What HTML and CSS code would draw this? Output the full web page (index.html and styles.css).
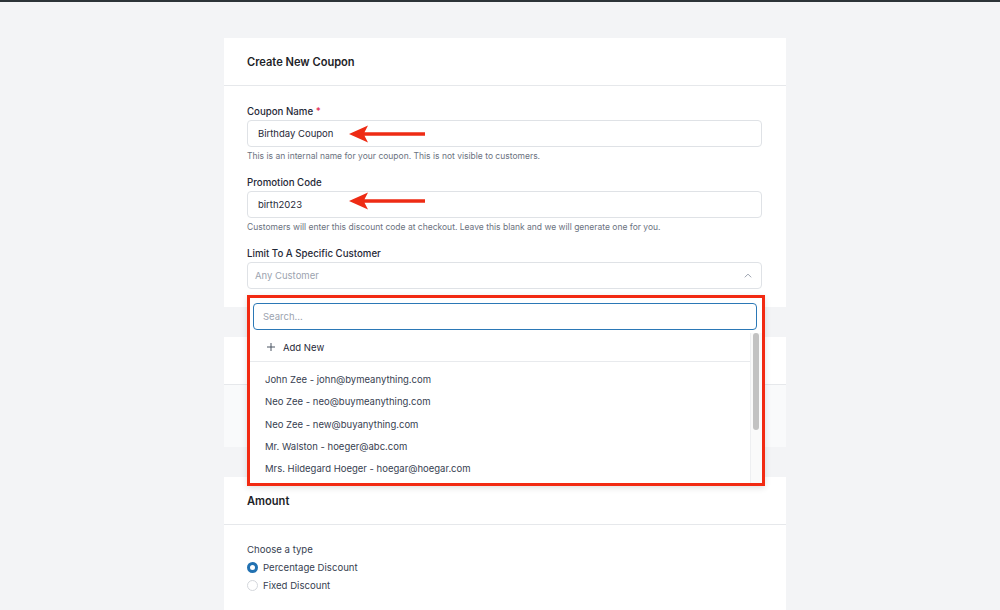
FILE: index.html
```html
<!DOCTYPE html>
<html lang="en">
<head>
<meta charset="utf-8">
<title>Create New Coupon</title>
<link rel="stylesheet" href="styles.css">
</head>
<body>
<div class="topbar"></div>
<main class="page">
  <section class="card">
    <header class="card-head"><h2 class="card-title">Create New Coupon</h2></header>
    <div class="card-body">
      <div class="field">
        <label class="label">Coupon Name <span class="req">*</span></label>
        <div class="control">
          <div class="input">Birthday Coupon</div>
          <svg class="arrow arrow-one" width="76" height="20" viewBox="0 0 76 20"><path d="M0 10 L19 1.5 L15.5 8.3 L76 8.3 L76 11.7 L15.5 11.7 L19 18.5 Z" fill="#ee2b14"/></svg>
        </div>
        <p class="help">This is an internal name for your coupon. This is not visible to customers.</p>
      </div>
      <div class="field">
        <label class="label">Promotion Code</label>
        <div class="control">
          <div class="input">birth2023</div>
          <svg class="arrow arrow-two" width="76" height="20" viewBox="0 0 76 20"><path d="M0 10 L19 1.5 L15.5 8.3 L76 8.3 L76 11.7 L15.5 11.7 L19 18.5 Z" fill="#ee2b14"/></svg>
        </div>
        <p class="help">Customers will enter this discount code at checkout. Leave this blank and we will generate one for you.</p>
      </div>
      <div class="field">
        <label class="label">Limit To A Specific Customer</label>
        <div class="control">
          <div class="select">
            <span class="placeholder">Any Customer</span>
            <svg class="chev" width="8" height="5" viewBox="0 0 8 5"><path d="M0.8 4.3 L4 1.1 L7.2 4.3" fill="none" stroke="#9ca3af" stroke-width="1"/></svg>
          </div>
          <div class="highlight">
            <div class="panel">
              <div class="search">Search...</div>
              <div class="list-wrap">
                <div class="list">
                  <div class="add-new">
                    <svg class="plus" width="8" height="8" viewBox="0 0 8 8"><path d="M4 0 V8 M0 4 H8" stroke="#4b5563" stroke-width="1"/></svg>
                    <span>Add New</span>
                  </div>
                  <ul class="options">
                    <li class="option">John Zee - john@bymeanything.com</li>
                    <li class="option">Neo Zee - neo@buymeanything.com</li>
                    <li class="option">Neo Zee - new@buyanything.com</li>
                    <li class="option">Mr. Walston - hoeger@abc.com</li>
                    <li class="option">Mrs. Hildegard Hoeger - hoegar@hoegar.com</li>
                  </ul>
                </div>
                <div class="scrollbar"><div class="thumb"></div></div>
              </div>
            </div>
          </div>
        </div>
      </div>
    </div>
  </section>

  <section class="card">
    <header class="card-head"><h2 class="card-title">&nbsp;</h2></header>
    <div class="card-body muted"></div>
  </section>

  <section class="card">
    <header class="card-head"><h2 class="card-title">Amount</h2></header>
    <div class="card-body amount">
      <div class="label plain">Choose a type</div>
      <div class="radio-row"><span class="radio checked"></span><span>Percentage Discount</span></div>
      <div class="radio-row"><span class="radio"></span><span>Fixed Discount</span></div>
    </div>
  </section>
</main>
</body>
</html>
```

FILE: styles.css
```css
* { box-sizing: border-box; }
html, body { margin: 0; padding: 0; }
body {
  background: #f3f4f6;
  font-family: Inter, "Noto Sans", "Liberation Sans", sans-serif;
  color: #1f2937;
  height: 610px;
  overflow: hidden;
}
.topbar { height: 2px; background: #2c3338; }
.page {
  width: 562px;
  margin: 36px 0 0 224px;
  display: flex;
  flex-direction: column;
  gap: 30px;
}
.card { background: #fff; }
.card-head {
  height: 48px;
  border-bottom: 1px solid #e6e8eb;
  display: flex;
  align-items: center;
  padding: 0 23px;
}
.card-title {
  margin: 0;
  font-size: 11.1px;
  font-weight: 600;
  color: #1d2327;
  line-height: 16px;
}
.card-body { padding: 17px 24px 18px 23px; }
.card-body.muted { height: 62px; background: #f9fafb; padding: 0; }
.field + .field { margin-top: 12px; }
.label {
  display: block;
  font-size: 9.7px;
  font-weight: 500;
  line-height: 16px;
  color: #1f2937;
  padding-top: 1px;
}
.label.plain { font-weight: 400; color: #374151; padding-top: 0; font-size: 9.6px; }
.req { color: #e11d48; }
.control { position: relative; }
.input, .select {
  height: 27px;
  border: 1px solid #dfe2e6;
  border-radius: 4px;
  background: #fff;
  display: flex;
  align-items: center;
  font-size: 9.5px;
  color: #1f2937;
}
.input { padding: 0 10px; }
.select { padding: 0 8px 0 7px; justify-content: space-between; }
.placeholder { color: #9ca3af; }
.chev { display: block; margin-right: 1px; }
.help {
  margin: 3px 0 0;
  font-size: 8.5px;
  line-height: 12px;
  color: #6b7280;
}
.arrow { position: absolute; left: 102px; }
.arrow-one { top: 4px; }
.arrow-two { top: 0; }

/* dropdown overlay */
.highlight {
  position: absolute;
  top: 33px;
  left: 0;
  right: -3px;
  height: 191px;
  border: 3px solid #f22a12;
  z-index: 5;
  box-shadow: 0 2px 6px rgba(0,0,0,0.12);
}
.panel {
  height: 100%;
  background: #fff;
  display: flex;
  flex-direction: column;
  padding-top: 5px;
}
.search {
  margin: 0 5px 0 3px;
  height: 27px;
  border: 1.5px solid #2b78b6;
  border-radius: 4px;
  padding: 0 9px;
  display: flex;
  align-items: center;
  font-size: 9.5px;
  color: #9ca3af;
}
.list-wrap {
  flex: 1;
  margin-top: 3px;
  display: flex;
  min-height: 0;
}
.list { flex: 1; }
.add-new {
  height: 29px;
  border-bottom: 1px solid #e8eaed;
  display: flex;
  align-items: center;
  padding-left: 17px;
  gap: 8px;
  font-size: 9.5px;
  color: #1f2937;
}
.plus { display: block; }
.options {
  list-style: none;
  margin: 0;
  padding: 7px 0 0 15px;
}
.option {
  height: 22.25px;
  line-height: 22px;
  font-size: 9.5px;
  color: #374151;
}
.scrollbar {
  width: 12px;
  border-left: 1px solid #eeeff1;
  background: #fafafa;
  padding: 0 2px 0 1px;
}
.thumb {
  height: 97px;
  width: 6px;
  margin: 0 auto;
  background: #c2c2c2;
  border-radius: 3px;
}

/* amount */
.card-body.amount { padding-bottom: 30px; }
.radio-row {
  display: flex;
  align-items: center;
  gap: 5px;
  height: 18px;
  font-size: 9.6px;
  color: #374151;
}
.radio {
  width: 11px;
  height: 11px;
  border-radius: 50%;
  border: 1px solid #d4d7dc;
  background: #fff;
  flex: none;
}
.radio.checked {
  border: 3.5px solid #2271b1;
  background: #fff;
}
```
